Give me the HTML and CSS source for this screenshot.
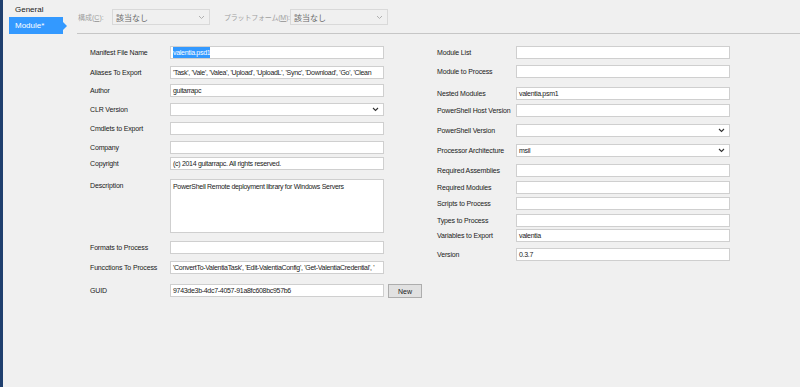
FILE: index.html
```html
<!DOCTYPE html>
<html lang="ja">
<head>
  <meta charset="UTF-8" />
  <title>Module Manifest</title>
  <link rel="stylesheet" href="styles.css">
</head>
<body>

<!-- Side tabs -->
<nav class="side-nav">
  <div class="nav-item">General</div>
  <div class="nav-item active">Module*</div>
</nav>

<div class="main">

  <!-- Configuration bar -->
  <div class="config-bar">
    <span class="config-label">構成(<u>C</u>):</span>
    <div class="config-select">
      <span>該当なし</span>
      <svg class="chev" width="7" height="5" viewBox="0 0 7 5"><path d="M1 1 L3.5 3.5 L6 1" fill="none" stroke="#b0b0b0" stroke-width="1"/></svg>
    </div>
    <span class="config-label platform">プラットフォーム(<u>M</u>):</span>
    <div class="config-select">
      <span>該当なし</span>
      <svg class="chev" width="7" height="5" viewBox="0 0 7 5"><path d="M1 1 L3.5 3.5 L6 1" fill="none" stroke="#b0b0b0" stroke-width="1"/></svg>
    </div>
  </div>

  <!-- Manifest form -->
  <div class="form-area">

    <div class="form-col left-col">
      <div class="lbl">Manifest File Name</div>
      <div class="field"><span class="selected">valentia.psd1</span></div>

      <div class="lbl">Aliases To Export</div>
      <div class="field">'Task', 'Vale', 'Valea', 'Upload', 'UploadL', 'Sync', 'Download', 'Go', 'Clean</div>

      <div class="lbl">Author</div>
      <div class="field">guitarrapc</div>

      <div class="lbl">CLR Version</div>
      <div class="field combo"><svg class="chev" width="7" height="5" viewBox="0 0 7 5"><path d="M1 1 L3.5 3.5 L6 1" fill="none" stroke="#333" stroke-width="1.1"/></svg></div>

      <div class="lbl">Cmdlets to Export</div>
      <div class="field"></div>

      <div class="lbl">Company</div>
      <div class="field"></div>

      <div class="lbl">Copyright</div>
      <div class="field">(c) 2014 guitarrapc. All rights reserved.</div>

      <div class="lbl">Description</div>
      <div class="field area">PowerShell Remote deployment library for Windows Servers</div>

      <div class="lbl">Formats to Process</div>
      <div class="field"></div>

      <div class="lbl">Funcctions To Process</div>
      <div class="field">'ConvertTo-ValentiaTask', 'Edit-ValentiaConfig', 'Get-ValentiaCredential', '</div>

      <div class="lbl">GUID</div>
      <div class="guid-row">
        <div class="field">9743de3b-4dc7-4057-91a8fc608bc957b6</div>
        <button class="btn">New</button>
      </div>
    </div>

    <div class="form-col right-col">
      <div class="lbl">Module List</div>
      <div class="field"></div>

      <div class="lbl">Module to Process</div>
      <div class="field"></div>

      <div class="lbl">Nested Modules</div>
      <div class="field">valentia.psm1</div>

      <div class="lbl">PowerShell Host Version</div>
      <div class="field"></div>

      <div class="lbl">PowerShell Version</div>
      <div class="field combo"><svg class="chev" width="7" height="5" viewBox="0 0 7 5"><path d="M1 1 L3.5 3.5 L6 1" fill="none" stroke="#333" stroke-width="1.1"/></svg></div>

      <div class="lbl">Processor Architecture</div>
      <div class="field combo">msil<svg class="chev" width="7" height="5" viewBox="0 0 7 5"><path d="M1 1 L3.5 3.5 L6 1" fill="none" stroke="#333" stroke-width="1.1"/></svg></div>

      <div class="lbl">Required Assemblies</div>
      <div class="field"></div>

      <div class="lbl">Required Modules</div>
      <div class="field"></div>

      <div class="lbl">Scripts to Process</div>
      <div class="field"></div>

      <div class="lbl">Types to Process</div>
      <div class="field"></div>

      <div class="lbl">Variables to Export</div>
      <div class="field">valentia</div>

      <div class="lbl">Version</div>
      <div class="field">0.3.7</div>
    </div>

  </div>
</div>

</body>
</html>
```

FILE: styles.css
```css
body {
  font-family: "Liberation Sans", Arial, "Noto Sans CJK JP", sans-serif;
  font-size: 7px;
  color: #1a1a1a;
  margin: 0;
  padding: 0;
  height: 387px;
  display: flex;
  background: #f0f0f0;
  border-left: 3px solid #1f3f6e;
  overflow: hidden;
}

/* Side tabs */
.side-nav {
  width: 74px;
  padding-top: 4px;
  flex-shrink: 0;
}

.nav-item {
  height: 12px;
  line-height: 12px;
  padding-left: 12px;
  font-size: 8px;
  color: #1a1a1a;
}

.nav-item.active {
  position: relative;
  margin-left: 6px;
  width: 54px;
  height: 17px;
  line-height: 17px;
  padding-left: 6px;
  box-sizing: border-box;
  background: #3399ff;
  color: #fff;
  margin-top: 1px;
}

.nav-item.active::after {
  content: "";
  position: absolute;
  right: -4px;
  top: 5px;
  border-top: 4px solid transparent;
  border-bottom: 4px solid transparent;
  border-left: 4px solid #3399ff;
}

.main {
  flex: 1;
  display: flex;
  flex-direction: column;
}

/* Configuration bar */
.config-bar {
  height: 34px;
  box-sizing: border-box;
  border-bottom: 1px solid #c6c6c6;
  display: flex;
  align-items: flex-start;
  padding-top: 9px;
  padding-left: 1px;
}

.config-label {
  color: #a0a0a0;
  margin-top: 3px;
  width: 34px;
  font-size: 7px;
  white-space: nowrap;
}

.config-label.platform {
  margin-left: 14px;
  width: 66px;
  letter-spacing: -0.2px;
}

.config-label u {
  text-decoration: underline;
}

.config-select {
  width: 98px;
  height: 16px;
  box-sizing: border-box;
  border: 1px solid #d9d9d9;
  display: flex;
  align-items: center;
  justify-content: space-between;
  padding: 0 4px 0 3px;
  color: #6a6a6a;
  font-size: 8px;
}

/* Manifest form */
.form-area {
  display: flex;
  padding: 12px 0 0 13px;
}

.form-col {
  display: grid;
  grid-template-columns: 80px 214px;
  align-items: start;
}

.left-col {
  width: 347px;
  grid-template-rows: 20px 18px 19px 19px 19px 16px 22px 62px 20px 23px 14px;
}

.right-col {
  grid-template-columns: 79px 214px;
  grid-template-rows: 19px 22px 17px 20px 20px 20px 17px 16px 17px 15px 19px 14px;
}

.lbl {
  padding-top: 2px;
  line-height: 9px;
  white-space: nowrap;
  letter-spacing: -0.15px;
}

.field {
  height: 13px;
  box-sizing: border-box;
  background: #fff;
  border: 1px solid #cfcfcf;
  padding: 0 2px;
  line-height: 11px;
  white-space: nowrap;
  overflow: hidden;
  letter-spacing: -0.3px;
  display: flex;
  align-items: center;
}

.field.combo {
  justify-content: space-between;
  padding-right: 4px;
}

.field.combo .chev {
  margin-left: auto;
}

.field.area {
  height: 54px;
  align-items: flex-start;
  padding-top: 1px;
}

.selected {
  background: #3399ff;
  color: #fff;
}

.guid-row {
  display: flex;
  align-items: flex-start;
}

.guid-row .field {
  width: 214px;
  flex-shrink: 0;
}

.btn {
  flex-shrink: 0;
  margin-left: 4px;
  width: 34px;
  height: 14px;
  padding: 0;
  font-family: inherit;
  font-size: 7px;
  color: #1a1a1a;
  background: #e1e1e1;
  border: 1px solid #adadad;
}
```
